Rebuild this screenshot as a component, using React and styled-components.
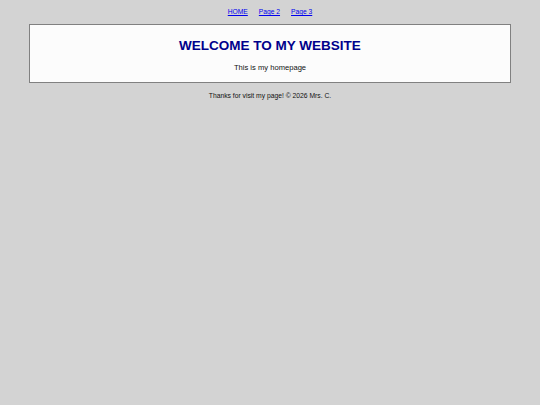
import React from "react";
import styled, { createGlobalStyle } from "styled-components";

const GlobalStyle = createGlobalStyle`
  html, body {
    margin: 0;
    padding: 0;
    background: #d3d3d3;
    font-family: "Liberation Sans", Arial, sans-serif;
    color: #111;
  }
`;

const Nav = styled.nav`
  display: flex;
  justify-content: center;
  gap: 11px;
  padding: 8px 0;
  line-height: 8px;
  font-size: 6.7px;

  a {
    color: #0000ee;
    text-decoration: underline;
  }
`;

const Card = styled.main`
  margin: 0 29px;
  padding: 13px 0 9px;
  background: #fcfcfc;
  border: 1px solid #808080;
  text-align: center;
`;

const Title = styled.h1`
  margin: 0;
  font-size: 13.5px;
  line-height: 16px;
  font-weight: bold;
  color: #00008b;
`;

const Intro = styled.p`
  margin: 9px 0 0;
  font-size: 7.6px;
  line-height: 10px;
`;

const Footer = styled.footer`
  margin-top: 8px;
  text-align: center;
  font-size: 6.75px;
  line-height: 10px;
`;

export default function App() {
  return (
    <>
      <GlobalStyle />
      <Nav>
        <a href="#home">HOME</a>
        <a href="#page2">Page 2</a>
        <a href="#page3">Page 3</a>
      </Nav>
      <Card>
        <Title>WELCOME TO MY WEBSITE</Title>
        <Intro>This is my homepage</Intro>
      </Card>
      <Footer>Thanks for visit my page! © 2026 Mrs. C.</Footer>
    </>
  );
}
